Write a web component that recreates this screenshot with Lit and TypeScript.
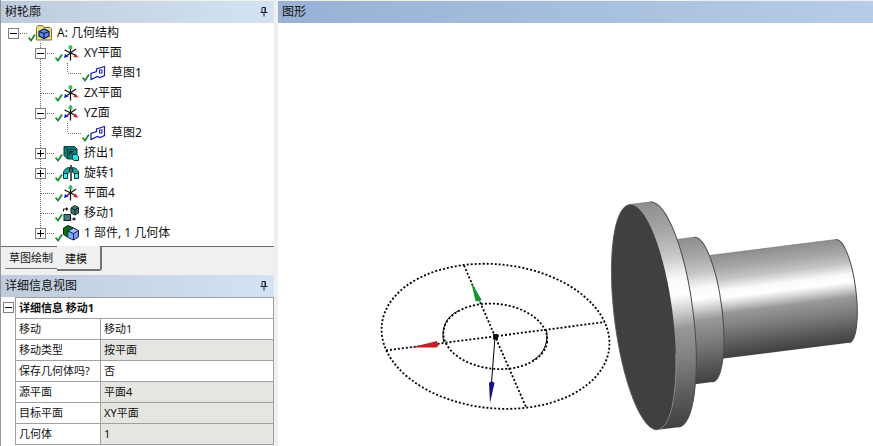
import { LitElement, html, svg, css, nothing } from "lit";
import { customElement, property, state } from "lit/decorators.js";
import { classMap } from "lit/directives/class-map.js";

type IconName = "project" | "axes" | "sketch" | "extrude" | "revolve" | "move" | "parts";

interface TreeNode {
  label: string;
  icon: IconName;
  level: number;
  toggle?: "open" | "closed";
  last?: boolean;
}

interface DetailRow {
  name: string;
  value: string;
  locked: boolean;
}

const NODES: TreeNode[] = [
  { label: "A: 几何结构", icon: "project", level: 0, toggle: "open" },
  { label: "XY平面", icon: "axes", level: 1, toggle: "open" },
  { label: "草图1", icon: "sketch", level: 2 },
  { label: "ZX平面", icon: "axes", level: 1 },
  { label: "YZ面", icon: "axes", level: 1, toggle: "open" },
  { label: "草图2", icon: "sketch", level: 2 },
  { label: "挤出1", icon: "extrude", level: 1, toggle: "closed" },
  { label: "旋转1", icon: "revolve", level: 1, toggle: "closed" },
  { label: "平面4", icon: "axes", level: 1 },
  { label: "移动1", icon: "move", level: 1 },
  { label: "1 部件, 1 几何体", icon: "parts", level: 1, toggle: "closed", last: true },
];

const DETAILS: DetailRow[] = [
  { name: "移动", value: "移动1", locked: false },
  { name: "移动类型", value: "按平面", locked: true },
  { name: "保存几何体吗?", value: "否", locked: false },
  { name: "源平面", value: "平面4", locked: true },
  { name: "目标平面", value: "XY平面", locked: true },
  { name: "几何体", value: "1", locked: true },
];

const ICONS = {
  project: svg`
    <path d="M0.500 15V2.500L2 0.500H6.500L8 2.500H14L15.500 4V15Z" fill="#f1e27e" stroke="#77703a"/>
    <path d="M3 6.500L8 4L13 6.500V11L8 13.500L3 11Z" fill="#5f8ff0" stroke="#14245c" stroke-width="1.300"/>
    <path d="M3 6.500L8 8.500L13 6.500M8 8.500V13" fill="none" stroke="#14245c" stroke-width="1.300"/>`,
  axes: svg`
    <path d="M7.500 3V15.500M1.500 5L13 10.500M13 4L4 10.500" fill="none" stroke="#111" stroke-width="1.200"/>
    <path d="M6 3.500V2L7.500 0L9 2V3.500Z" fill="#2fc050" stroke="#2fc050"/>
    <path d="M1 13L2 9L5.500 11.500Z" fill="#1414c8"/>
    <path d="M15.500 12.500L10.500 12L12 8.500Z" fill="#d8152a"/>`,
  sketch: svg`
    <path d="M1 14.500V8.500L6.500 6.500V4L14.500 1.500V10.500L10 12.500L7.500 11.500L1 14.500Z" fill="#fff" stroke="#1c1cae" stroke-width="1.200"/>
    <rect x="9.500" y="5" width="2.500" height="3" fill="none" stroke="#1c1cae"/>`,
  extrude: svg`
    <path d="M1 1.500H11.500L14 4V14H4.500L1 10.500Z" fill="#0c7f7b" stroke="#043b3b"/>
    <path d="M1.500 2L4.500 4.500H14M4.500 4.500V14" fill="none" stroke="#043b3b"/>
    <path d="M7 7L12 11.500M6.500 10V6.500H10" fill="none" stroke="#022"/>
    <path d="M9.500 9.500H13.500L15.500 11.500V15.500H11L9.500 14Z" fill="#2fe3e3" stroke="#043b3b"/>`,
  revolve: svg`
    <path d="M0.500 13V8C0.500 4.500 4 2.500 6.500 2.500V7L4.500 9V13Z" fill="#18a9a9" stroke="#033"/>
    <path d="M15.500 13V8C15.500 4.500 12 2.500 9.500 2.500V7L11.500 9V13Z" fill="#18a9a9" stroke="#033"/>
    <path d="M0.500 8.500H4.500V13.500H0.500ZM11.500 8.500H15.500V13.500H11.500Z" fill="#3ff0f0" stroke="#033"/>
    <path d="M8 0V16" stroke="#111" stroke-width="1.400"/>
    <path d="M5.500 5L8 2.500L10.500 5" fill="none" stroke="#033"/>`,
  move: svg`
    <path d="M8 3L11.500 0.500L15.500 2.500V8L12 10L8 8Z" fill="#3c7777" stroke="#122"/>
    <path d="M8 3L12 5L15.500 2.500M12 5V10" fill="none" stroke="#122"/>
    <rect x="1" y="9.500" width="6.500" height="6" fill="#477c7c" stroke="#122"/>
    <path d="M0.500 6.500V4H3M8.500 14H11" fill="none" stroke="#111"/>
    <path d="M3 2L5.500 4L3 6ZM10.500 12L13 14L10.500 16Z" fill="#111"/>`,
  parts: svg`
    <path d="M0.500 3L5 0.500L10.500 3V10L4.500 12L0.500 9.500Z" fill="#0d6b1c" stroke="#052a0a"/>
    <path d="M5 6L10.500 3L15.500 5.500V12L10.500 15L5 12.500Z" fill="#8494f2" stroke="#14245c"/>
    <path d="M5.500 6.500L10.500 4L14.500 5.800L10.500 8Z" fill="#a9c6fa"/>
    <path d="M5.500 7L10 9V14L5.500 12Z" fill="#74b3f0"/>
    <path d="M5 6L10.500 8.500L15.500 5.500M10.500 8.500V15" fill="none" stroke="#14245c"/>`,
};

const FONT = css`"Noto Sans", "Noto Sans CJK SC", sans-serif`;

@customElement("pin-button")
class PinButton extends LitElement {
  static styles = css`
    :host { display: flex; }
    button { display: flex; padding: 0; border: 0; background: none; }
  `;
  render() {
    return html`<button aria-label="固定">
      <svg width="8" height="10" viewBox="0 0 8 10">
        <path d="M2 5.500V0.500H5.500V5.500M0.500 5.500H7.500M4 6V9.500" fill="none" stroke="#223" />
        <path d="M5 0.500V5.500" stroke="#223" />
      </svg>
    </button>`;
  }
}

@customElement("toggle-box")
class ToggleBox extends LitElement {
  @property({ type: Boolean }) open = false;
  static styles = css`
    :host { display: flex; }
    button { display: flex; padding: 0; border: 0; background: #fff; }
  `;
  render() {
    return html`<button aria-label=${this.open ? "折叠" : "展开"}>
      <svg width="11" height="11" viewBox="0 0 11 11" shape-rendering="crispEdges">
        <rect x="0.500" y="0.500" width="10" height="10" fill="#fff" stroke="#808080" />
        <path d=${this.open ? "M2 5.5H9" : "M2 5.5H9M5.5 2V9"} stroke="#000" />
      </svg>
    </button>`;
  }
}

@customElement("tree-row")
class TreeRow extends LitElement {
  @property({ attribute: false }) node!: TreeNode;
  static styles = css`
    :host { display: flex; align-items: center; height: 20px; }
    .cell { display: grid; place-items: center start; width: 27px; height: 20px; }
    .cell > * { grid-area: 1 / 1; }
    .box { margin-left: 7px; }
    svg { display: block; flex: none; }
    .label { margin-left: 5px; font: 12px/20px ${FONT}; white-space: nowrap; }
  `;

  private guide(d: string, toggle?: string) {
    return html`<span class="cell">
      <svg width="27" height="20" viewBox="0 0 27 20" shape-rendering="crispEdges">
        <path d=${d} fill="none" stroke="#707070" stroke-dasharray="1 1" />
      </svg>
      ${toggle ? html`<toggle-box class="box" ?open=${toggle === "open"}></toggle-box>` : nothing}
    </span>`;
  }

  private guides() {
    const { level, toggle, last } = this.node;
    const across = "M13 10.5H27";
    if (level === 0) return this.guide(across, toggle);
    const down = last ? "M12.5 0V10" : "M12.5 0V20";
    if (level === 1) return [this.guide(""), this.guide(down + across, toggle)];
    return [this.guide(""), this.guide("M12.5 0V20"), this.guide("M12.5 0V10" + across)];
  }

  render() {
    return html`
      ${this.guides()}
      <svg width="8" height="20" viewBox="0 0 8 20">
        <path d="M0.500 14.500L3 17.500L7 11.500" fill="none" stroke="#1c8a2c" stroke-width="1.800" />
      </svg>
      <svg width="16" height="16" viewBox="0 0 16 16">${ICONS[this.node.icon]}</svg>
      <span class="label">${this.node.label}</span>
    `;
  }
}

@customElement("model-view")
class ModelView extends LitElement {
  static styles = css`
    :host { display: flex; min-height: 0; }
    svg { width: 100%; height: 100%; }
  `;

  /* A round section lying along the part's axis, from x0 to x1. */
  private section(x0: number, x1: number, rx: number, ry: number) {
    return svg`
      <path d="M${x0} ${-ry}H${x1}A${rx} ${ry} 0 0 1 ${x1} ${ry}H${x0}Z" fill="url(#steel)"/>
      <path d="M${x1} ${-ry}A${rx} ${ry} 0 0 1 ${x1} ${ry}" fill="none" stroke="#4a4a4a"/>
      <path d="M${x0} ${-ry}H${x1}" stroke="#777" stroke-width="0.600"/>`;
  }

  render() {
    return html`<svg viewBox="278 23 595 423" role="img" aria-label="几何体">
      <defs>
        <linearGradient id="steel" x1="0" y1="0" x2="0" y2="1">
          <stop offset="0" stop-color="#8e8e8e" />
          <stop offset="0.130" stop-color="#a6a6a6" />
          <stop offset="0.240" stop-color="#c4c4c4" />
          <stop offset="0.350" stop-color="#fafafa" />
          <stop offset="0.420" stop-color="#ffffff" />
          <stop offset="0.490" stop-color="#d2d2d2" />
          <stop offset="0.570" stop-color="#989898" />
          <stop offset="0.720" stop-color="#7c7c7c" />
          <stop offset="0.860" stop-color="#5c5c5c" />
          <stop offset="1" stop-color="#404040" />
        </linearGradient>
      </defs>
      <g fill="none" stroke="#000" stroke-width="1.800" stroke-dasharray="2 2">
        <ellipse cx="495.500" cy="336.300" rx="114.300" ry="72" transform="rotate(5.750 495.500 336.300)" />
        <ellipse cx="495.300" cy="336.300" rx="52.100" ry="32.500" transform="rotate(5.750 495 336.300)" />
        <path d="M386 350.500L605 322M464 265.500L526 407" />
      </g>
      <path d="M443.500 342C441 325 448 316 458 311M546.500 330C549 346 541 356 532 361" fill="none" stroke="#000" />
      <path d="M495 337L491.500 383" stroke="#000" />
      <rect x="493" y="334" width="5" height="5.500" fill="#111" />
      <path d="M471 282L481.500 299.500L480 301.500L475.500 301Z" fill="#15952f" />
      <path d="M411 347.500L437 341L438.500 346L436 347.500Z" fill="#c4202c" />
      <path d="M490 403L489 383L491.500 381L494.500 383Z" fill="#14147c" />
      <g transform="translate(643.700 317.200) rotate(-7.200)">
        <g transform="translate(0 -1)">${this.section(60, 200.5, 13.4, 52)}</g>
        ${this.section(21, 60, 18.7, 73)}
        ${this.section(0, 20.5, 29.2, 113.5)}
        <ellipse rx="29.200" ry="113.500" fill="#404040" />
        <path d="M0 -113.500A29.200 113.500 0 0 0 0 113.500" fill="none" stroke="#555" stroke-width="0.800" />
        <path d="M27.330 40A29.200 113.500 0 0 1 0 113.500" fill="none" stroke="#9a9a9a" stroke-width="0.700" />
      </g>
    </svg>`;
  }
}

@customElement("app-root")
class AppRoot extends LitElement {
  @state() private tab = "建模";

  static styles = css`
    :host {
      display: grid;
      grid-template-columns: 278px minmax(0, 1fr);
      min-height: 100vh;
      background: #fff;
      color: #111;
      font: 12px/20px ${FONT};
    }
    .side {
      display: flex;
      flex-direction: column;
      box-sizing: border-box;
      border-left: 1px solid #969696;
      padding-right: 4px;
      background: #f0f0f0;
    }
    .view { display: flex; flex-direction: column; min-width: 0; }
    .model { flex: 1; }
    h2 {
      display: flex;
      align-items: center;
      justify-content: space-between;
      box-sizing: border-box;
      height: 22px;
      margin: 0;
      padding: 0 6px 0 4px;
      background: linear-gradient(90deg, #becbdd, #d3e3f4);
      font: 12px/22px ${FONT};
    }
    .top { border-top: 1px solid #f0f0f0; height: 23px; }
    .blue { background: linear-gradient(90deg, #98b1d4, #b5cde8); }
    .tree { padding-bottom: 3px; background: #fff; }
    .tabs {
      display: flex;
      align-items: flex-start;
      height: 28px;
      padding-left: 4px;
      border-top: 1px solid #6e6e6e;
    }
    .tab {
      height: 22px;
      padding: 0 4px;
      border: 0 solid #747474;
      border-bottom-width: 1px;
      background: #f0f0f0;
      color: #111;
      font: 11px/20px ${FONT};
      white-space: nowrap;
    }
    .active {
      height: 25px;
      margin-top: -1px;
      padding: 2px 13px 0 8px;
      border-width: 0 2px 2px 0;
      border-radius: 0 0 3px 0;
    }
    .details { display: flex; flex: 1; background: #fff; }
    .gutter { width: 14px; padding: 5px 0 0 2px; box-sizing: border-box; }
    table {
      flex: 1;
      align-self: flex-start;
      border-collapse: collapse;
      table-layout: fixed;
      font-size: 11px;
      line-height: 20px;
    }
    th, td {
      height: 20px;
      padding: 0 3px;
      border: 1px solid #a0a0a0;
      text-align: left;
      font-weight: 400;
      white-space: nowrap;
    }
    .names { width: 85px; }
    .group { font-weight: 700; }
    .locked { background: #e6e5e2; }
  `;

  private tabButton(name: string) {
    const active = this.tab === name;
    return html`<button
      role="tab"
      aria-selected=${active}
      class=${classMap({ tab: true, active })}
      @click=${() => (this.tab = name)}
    >${name}</button>`;
  }

  render() {
    return html`
      <aside class="side">
        <h2 class="top">树轮廓<pin-button></pin-button></h2>
        <div class="tree">${NODES.map((n) => html`<tree-row .node=${n}></tree-row>`)}</div>
        <div class="tabs" role="tablist">${this.tabButton("草图绘制")}${this.tabButton("建模")}</div>
        <h2>详细信息视图<pin-button></pin-button></h2>
        <div class="details">
          <div class="gutter"><toggle-box open></toggle-box></div>
          <table>
            <colgroup><col class="names" /><col /></colgroup>
            <tr><th class="group" colspan="2" scope="colgroup">详细信息 移动1</th></tr>
            ${DETAILS.map(
              (r) => html`<tr>
                <th scope="row">${r.name}</th>
                <td class=${classMap({ locked: r.locked })}>${r.value}</td>
              </tr>`
            )}
          </table>
        </div>
      </aside>
      <main class="view">
        <h2 class="top blue">图形</h2>
        <model-view class="model"></model-view>
      </main>
    `;
  }
}
